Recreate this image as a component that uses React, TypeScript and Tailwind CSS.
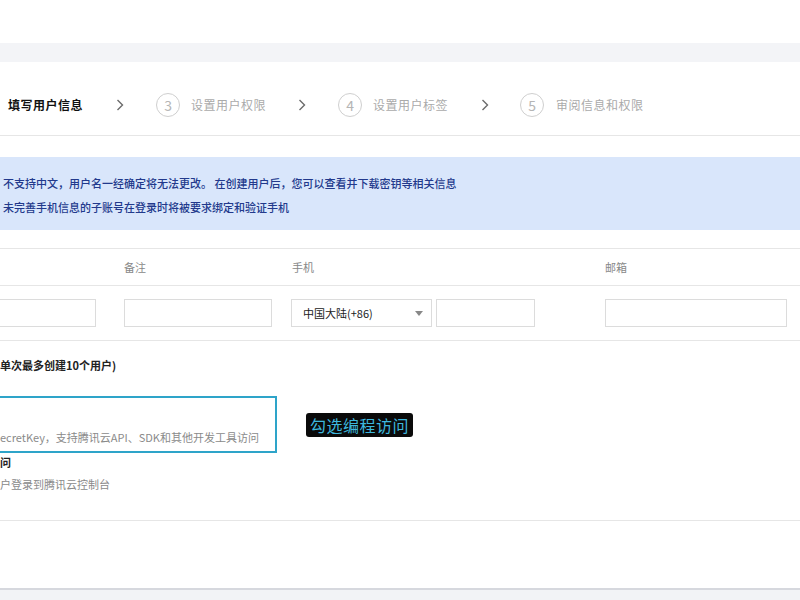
import React from "react";

const Chevron = () => (
  <svg width="8" height="12" viewBox="0 0 8 12" className="shrink-0">
    <polyline points="1.5,1 6.5,6 1.5,11" fill="none" stroke="#6b6b6b" strokeWidth="1.4" />
  </svg>
);

const Circle = ({ n }: { n: string }) => (
  <div className="w-[24px] h-[24px] shrink-0 rounded-full border-[1.5px] border-[#cfcfcf] flex items-center justify-center text-[14px] text-[#b5b5b5] leading-none">
    {n}
  </div>
);

export default function App() {
  return (
    <div
      className="w-[800px] h-[600px] overflow-hidden bg-white flex flex-col text-[11px]"
      style={{ fontFamily: '"Noto Sans CJK SC", "Noto Sans", sans-serif' }}
    >
      <div className="h-[43px] shrink-0 bg-white" />
      <div className="h-[19px] shrink-0 bg-[#f3f4f7]" />
      <div className="h-[526px] shrink-0 bg-white flex flex-col">
        {/* steps */}
        <div className="h-[74px] shrink-0 border-b border-[#e6e6e6] flex items-center pt-[12px] pl-[8px]">
          <span className="text-[12px] tracking-[0.5px] font-bold text-[#111]">填写用户信息</span>
          <div className="ml-[33px]"><Chevron /></div>
          <div className="ml-[32px]"><Circle n="3" /></div>
          <span className="ml-[11px] text-[12px] tracking-[0.5px] text-[#aaaaaa]">设置用户权限</span>
          <div className="ml-[32px]"><Chevron /></div>
          <div className="ml-[32px]"><Circle n="4" /></div>
          <span className="ml-[11px] text-[12px] tracking-[0.5px] text-[#aaaaaa]">设置用户标签</span>
          <div className="ml-[33px]"><Chevron /></div>
          <div className="ml-[31px]"><Circle n="5" /></div>
          <span className="ml-[12px] text-[12px] tracking-[0.5px] text-[#aaaaaa]">审阅信息和权限</span>
        </div>

        {/* banner */}
        <div className="mt-[21px] h-[73px] shrink-0 bg-[#d9e6fb] pt-[14px] pl-[3px] text-[#22398c] leading-[24px] font-medium">
          <div>不支持中文，用户名一经确定将无法更改。 在创建用户后，您可以查看并下载密钥等相关信息</div>
          <div>未完善手机信息的子账号在登录时将被要求绑定和验证手机</div>
        </div>

        {/* table header */}
        <div className="mt-[18px] h-[38px] shrink-0 border-t border-b border-[#e6e6e6] flex items-center text-[#888]">
          <div className="w-[124px] shrink-0" />
          <div className="w-[168px] shrink-0">备注</div>
          <div className="w-[313px] shrink-0">手机</div>
          <div>邮箱</div>
        </div>

        {/* input row */}
        <div className="h-[55px] shrink-0 border-b border-[#e6e6e6] flex items-center">
          <div className="-ml-[10px] w-[106px] h-[28px] shrink-0 border border-[#dcdcdc]" />
          <div className="ml-[28px] w-[148px] h-[28px] shrink-0 border border-[#dcdcdc]" />
          <div className="ml-[19px] w-[141px] h-[28px] shrink-0 border border-[#dcdcdc] flex items-center justify-between pl-[11px] pr-[8px] text-[#222]">
            <span>中国大陆(+86)</span>
            <svg width="8" height="5" viewBox="0 0 8 5"><polygon points="0,0 8,0 4,5" fill="#888" /></svg>
          </div>
          <div className="ml-[4px] w-[99px] h-[28px] shrink-0 border border-[#dcdcdc]" />
          <div className="ml-[70px] w-[182px] h-[28px] shrink-0 border border-[#dcdcdc]" />
        </div>

        <div className="mt-[14px] leading-[20px] text-[11px] font-bold text-[#222]">单次最多创建10个用户)</div>

        {/* highlighted option */}
        <div className="mt-[21px] flex items-center">
          <div className="-ml-[10px] w-[287px] h-[57px] shrink-0 border-2 border-[#2ea4c9] flex items-end pb-[6px] pl-[8px]">
            <span className="text-[#8a8a8a] leading-[16px] whitespace-nowrap">ecretKey，支持腾讯云API、SDK和其他开发工具访问</span>
          </div>
          <div className="ml-[29px] h-[24px] px-[4px] rounded-[3px] bg-[#0a0a0a] text-[#3db7de] text-[16px] leading-[24px] tracking-[0.5px]">
            勾选编程访问
          </div>
        </div>

        <div className="mt-[1px] leading-[16px] font-bold text-[#222] text-[11px]">问</div>
        <div className="mt-[6px] leading-[16px] text-[#8a8a8a]">户登录到腾讯云控制台</div>

        <div className="mt-[28px] border-t border-[#e6e6e6]" />
      </div>
      <div className="flex-1 border-t-2 border-[#d6d8de] bg-[#f2f3f6]" />
    </div>
  );
}
